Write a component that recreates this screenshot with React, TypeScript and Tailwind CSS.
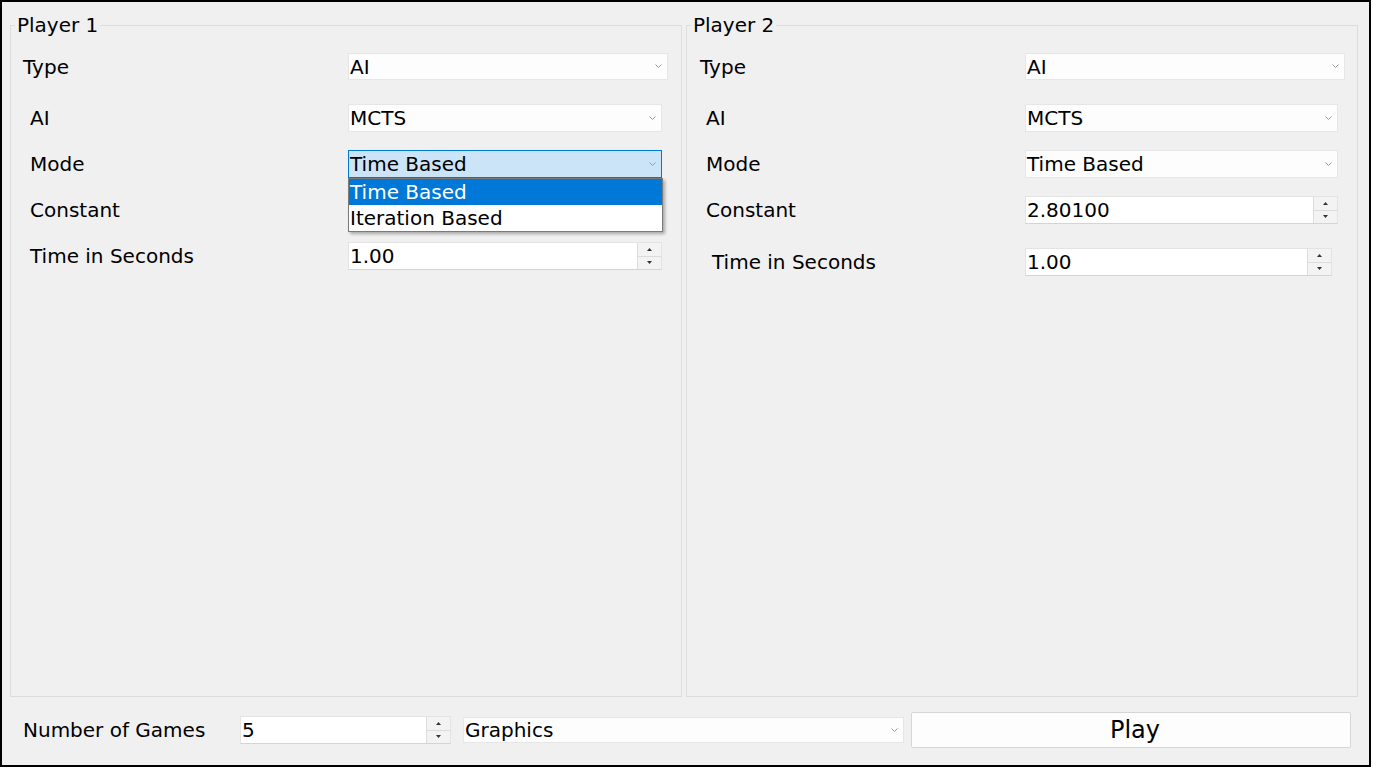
import React from "react";

function Chevron() {
  return (
    <svg width="7" height="5" viewBox="0 0 7 5" className="shrink-0">
      <path d="M0.5 0.5 L3.5 3.5 L6.5 0.5" fill="none" stroke="#9a9a9a" strokeWidth="1" />
    </svg>
  );
}

function Arrow({ up }: { up?: boolean }) {
  return (
    <svg width="5" height="3" viewBox="0 0 5 3">
      <path d={up ? "M0 3 L2.5 0 L5 3 Z" : "M0 0 L2.5 3 L5 0 Z"} fill="#333" />
    </svg>
  );
}

function Combo({ value, className, focused }: { value: string; className: string; focused?: boolean }) {
  return (
    <div
      className={
        "flex items-center justify-between pl-[1px] pr-[5px] border leading-none " +
        (focused ? "bg-[#cce4f7] border-[#0078d7] " : "bg-[#fdfdfd] border-[#e6e6e6] ") +
        className
      }
    >
      <span>{value}</span>
      <Chevron />
    </div>
  );
}

function Spin({ value, className }: { value: string; className: string }) {
  return (
    <div className={"flex bg-white border border-[#e3e3e3] border-b-[#d4d4d4] " + className}>
      <div className="flex-1 flex items-center pl-[1px] leading-none">{value}</div>
      <div className="w-[24px] flex flex-col bg-[#f3f3f3] border-l border-[#dcdcdc]">
        <div className="flex-1 flex items-center justify-center border-b border-[#dcdcdc]">
          <Arrow up />
        </div>
        <div className="flex-1 flex items-center justify-center">
          <Arrow />
        </div>
      </div>
    </div>
  );
}

function PlayerBox({ title, right }: { title: string; right?: boolean }) {
  const labelW = right ? "w-[319px]" : "w-[318px]";
  const fieldW = right ? "w-[313px] h-[28px]" : "w-[314px] h-[28px]";
  return (
    <fieldset className="w-[672px] border border-[#dcdcdc] min-w-0">
      <legend className="ml-[4px] px-[2px] leading-[20px]">{title}</legend>
      <div className="flex flex-col pt-[18px]">
        <div className={"flex items-center " + (right ? "pl-[13px]" : "pl-[12px]")}>
          <div className="w-[325px]">Type</div>
          <Combo value="AI" className="w-[320px] h-[27px]" />
        </div>

        <div className="flex flex-col pl-[19px] pt-[24px] gap-[18px]">
          <div className="flex items-center">
            <div className={labelW}>AI</div>
            <Combo value="MCTS" className={fieldW} />
          </div>
          <div className="flex items-center">
            <div className={labelW}>Mode</div>
            {right ? (
              <Combo value="Time Based" className={fieldW} />
            ) : (
              <div className="relative z-10">
                <Combo value="Time Based" focused className={fieldW} />
                <div className="absolute left-0 top-full w-[315px] bg-white border border-[#7a7a7a] shadow-[2px_2px_3px_rgba(0,0,0,0.3)] leading-none">
                  <div className="h-[26px] flex items-center pl-[1px] bg-[#0078d7] text-white">Time Based</div>
                  <div className="h-[26px] flex items-center pl-[1px]">Iteration Based</div>
                </div>
              </div>
            )}
          </div>
          <div className="flex items-center">
            <div className={labelW}>Constant</div>
            {/* left one sits under the open popup */}
            <Spin value={right ? "2.80100" : ""} className={fieldW} />
          </div>
          {!right && (
            <div className="flex items-center">
              <div className="w-[318px]">Time in Seconds</div>
              <Spin value="1.00" className={fieldW} />
            </div>
          )}
        </div>

        {right && (
          <div className="flex items-center pl-[25px] pt-[24px]">
            <div className="w-[313px]">Time in Seconds</div>
            <Spin value="1.00" className="w-[307px] h-[28px]" />
          </div>
        )}
      </div>
    </fieldset>
  );
}

export default function App() {
  return (
    <div className="w-[1373px] h-[768px] bg-white">
      <div className="w-[1371px] h-[767px] border-2 border-black bg-[#f0f0f0] flex flex-col font-['DejaVu_Sans',sans-serif] text-[20px] leading-[24px] text-black">
        <div className="flex-1 flex gap-[4px] pl-[8px] pt-[13px]">
          <PlayerBox title="Player 1" />
          <PlayerBox title="Player 2" right />
        </div>

        <div className="h-[68px] flex items-center pl-[21px] pb-[2px]">
          <div className="w-[217px]">Number of Games</div>
          <Spin value="5" className="w-[211px] h-[28px]" />
          <Combo value="Graphics" className="ml-[12px] w-[441px] h-[26px]" />
          <button className="ml-[7px] w-[440px] h-[36px] pl-[8px] bg-[#fdfdfd] border border-[#d6d6d6] rounded-[2px] text-[24px] leading-none">
            Play
          </button>
        </div>
      </div>
    </div>
  );
}
